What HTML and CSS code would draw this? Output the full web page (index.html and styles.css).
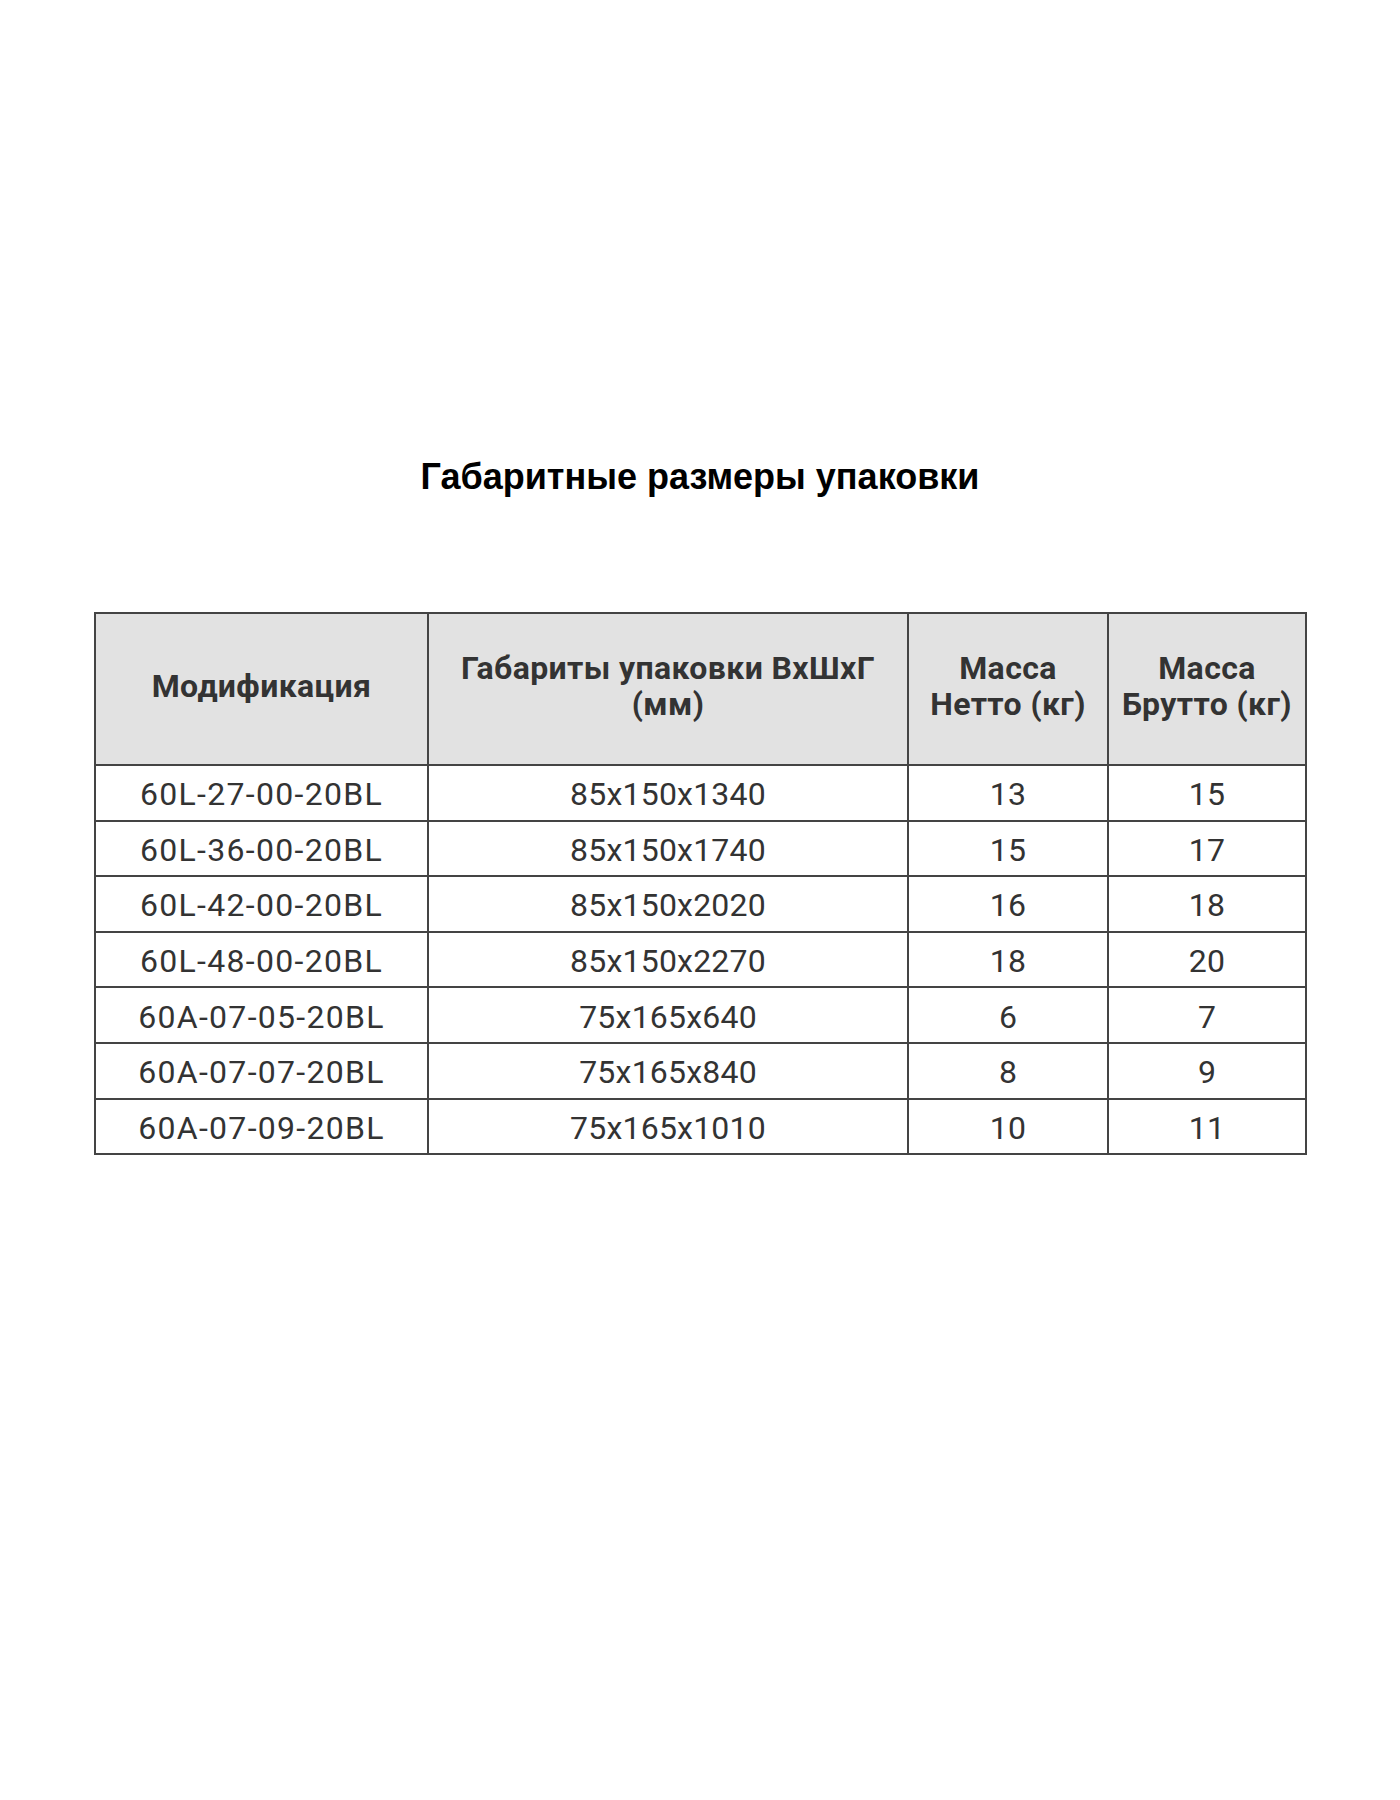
FILE: index.html
```html
<!DOCTYPE html>
<html lang="ru">
<head>
<meta charset="utf-8">
<title>Габаритные размеры упаковки</title>
<link rel="stylesheet" href="styles.css">
</head>
<body>
<main class="page">
  <h1 class="title">Габаритные размеры упаковки</h1>
  <table class="spec">
    <colgroup>
      <col class="c1"><col class="c2"><col class="c3"><col class="c4">
    </colgroup>
    <thead>
      <tr>
        <th>Модификация</th>
        <th>Габариты упаковки ВхШхГ<br>(мм)</th>
        <th>Масса<br>Нетто (кг)</th>
        <th>Масса<br>Брутто (кг)</th>
      </tr>
    </thead>
    <tbody>
      <tr><td class="model">60L-27-00-20BL</td><td>85x150x1340</td><td>13</td><td>15</td></tr>
      <tr><td class="model">60L-36-00-20BL</td><td>85x150x1740</td><td>15</td><td>17</td></tr>
      <tr><td class="model">60L-42-00-20BL</td><td>85x150x2020</td><td>16</td><td>18</td></tr>
      <tr><td class="model">60L-48-00-20BL</td><td>85x150x2270</td><td>18</td><td>20</td></tr>
      <tr><td class="model">60A-07-05-20BL</td><td>75x165x640</td><td>6</td><td>7</td></tr>
      <tr><td class="model">60A-07-07-20BL</td><td>75x165x840</td><td>8</td><td>9</td></tr>
      <tr><td class="model">60A-07-09-20BL</td><td>75x165x1010</td><td>10</td><td>11</td></tr>
    </tbody>
  </table>
</main>
</body>
</html>
```
FILE: styles.css
```css
html, body {
  margin: 0;
  padding: 0;
  background: #ffffff;
}
.page {
  width: 1400px;
  padding-top: 453px;
  display: flex;
  flex-direction: column;
  align-items: center;
}
.title {
  margin: 0;
  font-family: "Liberation Sans", Arial, sans-serif;
  font-weight: bold;
  font-size: 36px;
  line-height: 48px;
  color: #000;
  text-align: center;
}
.spec {
  margin-top: 111px;
  margin-left: 94px;
  align-self: flex-start;
  border-collapse: collapse;
  table-layout: fixed;
  width: 1211px;
  font-family: Roboto, "Noto Sans", sans-serif;
  color: #333;
}
.c1 { width: 333px; }
.c2 { width: 480px; }
.c3 { width: 200px; }
.c4 { width: 198px; }
.spec th,
.spec td {
  border: 2px solid #444;
  padding: 0;
  text-align: center;
  vertical-align: middle;
}
.spec th {
  background: #e2e2e2;
  font-weight: bold;
  font-size: 32px;
  line-height: 36px;
  letter-spacing: 0.4px;
  height: 144px;
  padding-bottom: 6px;
}
.spec td {
  font-size: 32px;
  line-height: 36px;
  letter-spacing: 0.2px;
  height: 50.6px;
  padding-top: 3px;
}
.spec td.model {
  letter-spacing: 1.3px;
}
```
